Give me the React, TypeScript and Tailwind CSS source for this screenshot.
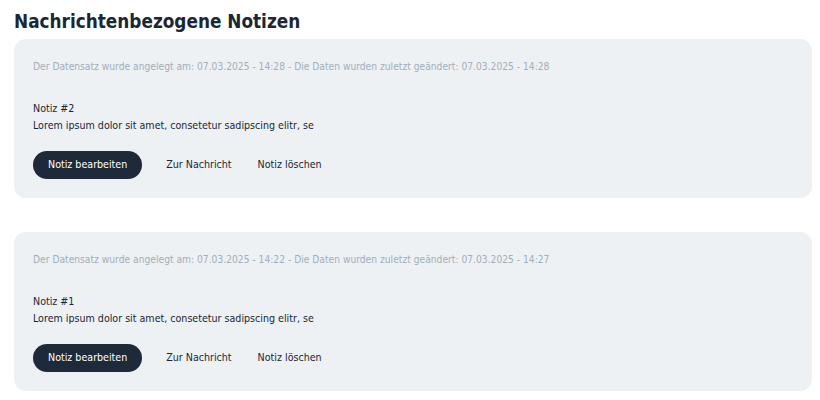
import React from "react";

const notes = [
  {
    created: "07.03.2025 - 14:28",
    changed: "07.03.2025 - 14:28",
    title: "Notiz #2",
    body: "Lorem ipsum dolor sit amet, consetetur sadipscing elitr, se",
  },
  {
    created: "07.03.2025 - 14:22",
    changed: "07.03.2025 - 14:27",
    title: "Notiz #1",
    body: "Lorem ipsum dolor sit amet, consetetur sadipscing elitr, se",
  },
];

export default function App() {
  return (
    <div
      className="w-[820px] h-[400px] bg-white px-[14px] pt-2 text-[#1b2636] overflow-hidden"
      style={{ fontFamily: "'DejaVu Sans Condensed', sans-serif" }}
    >
      <h1 className="text-[18.8px] leading-[28px] font-bold mb-[3px]">Nachrichtenbezogene Notizen</h1>

      <div className="flex flex-col gap-[34px]">
        {notes.map((n) => (
          <div key={n.title} className="w-[798px] bg-[#edf1f4] rounded-xl px-[19px] pt-5 pb-[19px]">
            <p className="text-[10.2px] leading-4 text-[#a3adba]">
              Der Datensatz wurde angelegt am: {n.created} - Die Daten wurden zuletzt geändert: {n.changed}
            </p>
            <div className="mt-[25px] text-[10.6px] leading-[17px]">
              <p>{n.title}</p>
              <p>{n.body}</p>
            </div>
            <div className="mt-[17px] flex items-center text-[10.6px]">
              <button className="h-7 px-[15px] rounded-full bg-[#1e2a3a] text-white">Notiz bearbeiten</button>
              <button className="ml-6">Zur Nachricht</button>
              <button className="ml-[26px]">Notiz löschen</button>
            </div>
          </div>
        ))}
      </div>
    </div>
  );
}
